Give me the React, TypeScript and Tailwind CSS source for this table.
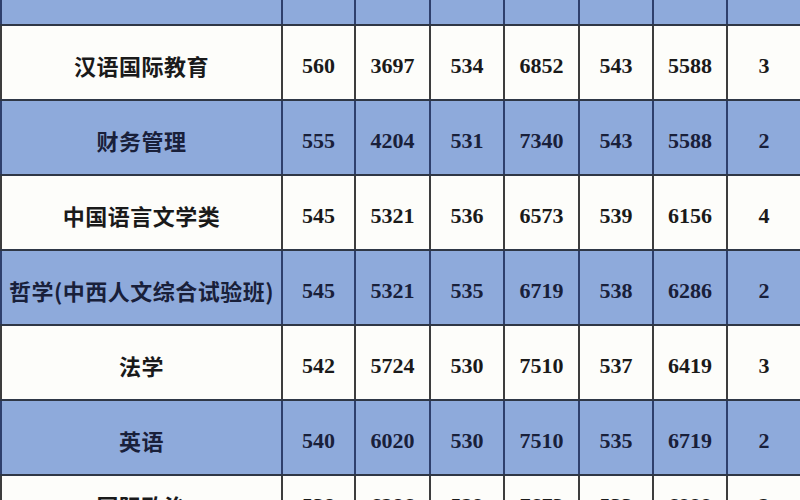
const rows: { name: string; vals: string[] }[] = [
  { name: '新闻传播学类', vals: ['562', '3512', '535', '6719', '545', '5321', '2'] },
  { name: '汉语国际教育', vals: ['560', '3697', '534', '6852', '543', '5588', '3'] },
  { name: '财务管理', vals: ['555', '4204', '531', '7340', '543', '5588', '2'] },
  { name: '中国语言文学类', vals: ['545', '5321', '536', '6573', '539', '6156', '4'] },
  { name: '哲学(中西人文综合试验班)', vals: ['545', '5321', '535', '6719', '538', '6286', '2'] },
  { name: '法学', vals: ['542', '5724', '530', '7510', '537', '6419', '3'] },
  { name: '英语', vals: ['540', '6020', '530', '7510', '535', '6719', '2'] },
  { name: '国际政治', vals: ['538', '6286', '529', '7673', '533', '6999', '2'] },
];

export default function App() {
  return (
    <div className="w-[800px] h-[500px] overflow-hidden bg-white">
      <div className="-mt-[49px] flex flex-col">
        {rows.map((row, i) => {
          const blue = i % 2 === 0;
          // the rows cut by the page edges sit their text a little differently
          const pad = i === 0 ? 'pb-[2px]' : i === rows.length - 1 ? 'pb-[14px]' : 'pt-[5px]';
          return (
            <div
              key={i}
              className={`grid h-[75px] grid-cols-[281px_73px_75px_74px_75px_74px_74px_74px] border-b-2 border-[#2f3746] ${
                blue ? 'bg-[#8eaadb] text-[#19203a]' : 'bg-[#fdfdfa] text-[#1a1a1a]'
              }`}
            >
              <div
                className={`flex items-center justify-center border-l-2 ${pad} text-[22px] font-bold tracking-[0.5px] ${
                  blue ? 'border-[#2e3f6c]' : 'border-[#3d3d3d]'
                }`}
                style={{ fontFamily: '"Noto Sans CJK SC", "Noto Sans", sans-serif' }}
              >
                {row.name}
              </div>
              {row.vals.map((v, j) => (
                <div
                  key={j}
                  className={`flex items-center justify-center border-l-2 ${pad} text-[22px] font-bold ${
                    blue ? 'border-[#2e3f6c]' : 'border-[#3d3d3d]'
                  }`}
                  style={{ fontFamily: '"Liberation Serif", serif' }}
                >
                  {v}
                </div>
              ))}
            </div>
          );
        })}
      </div>
    </div>
  );
}
